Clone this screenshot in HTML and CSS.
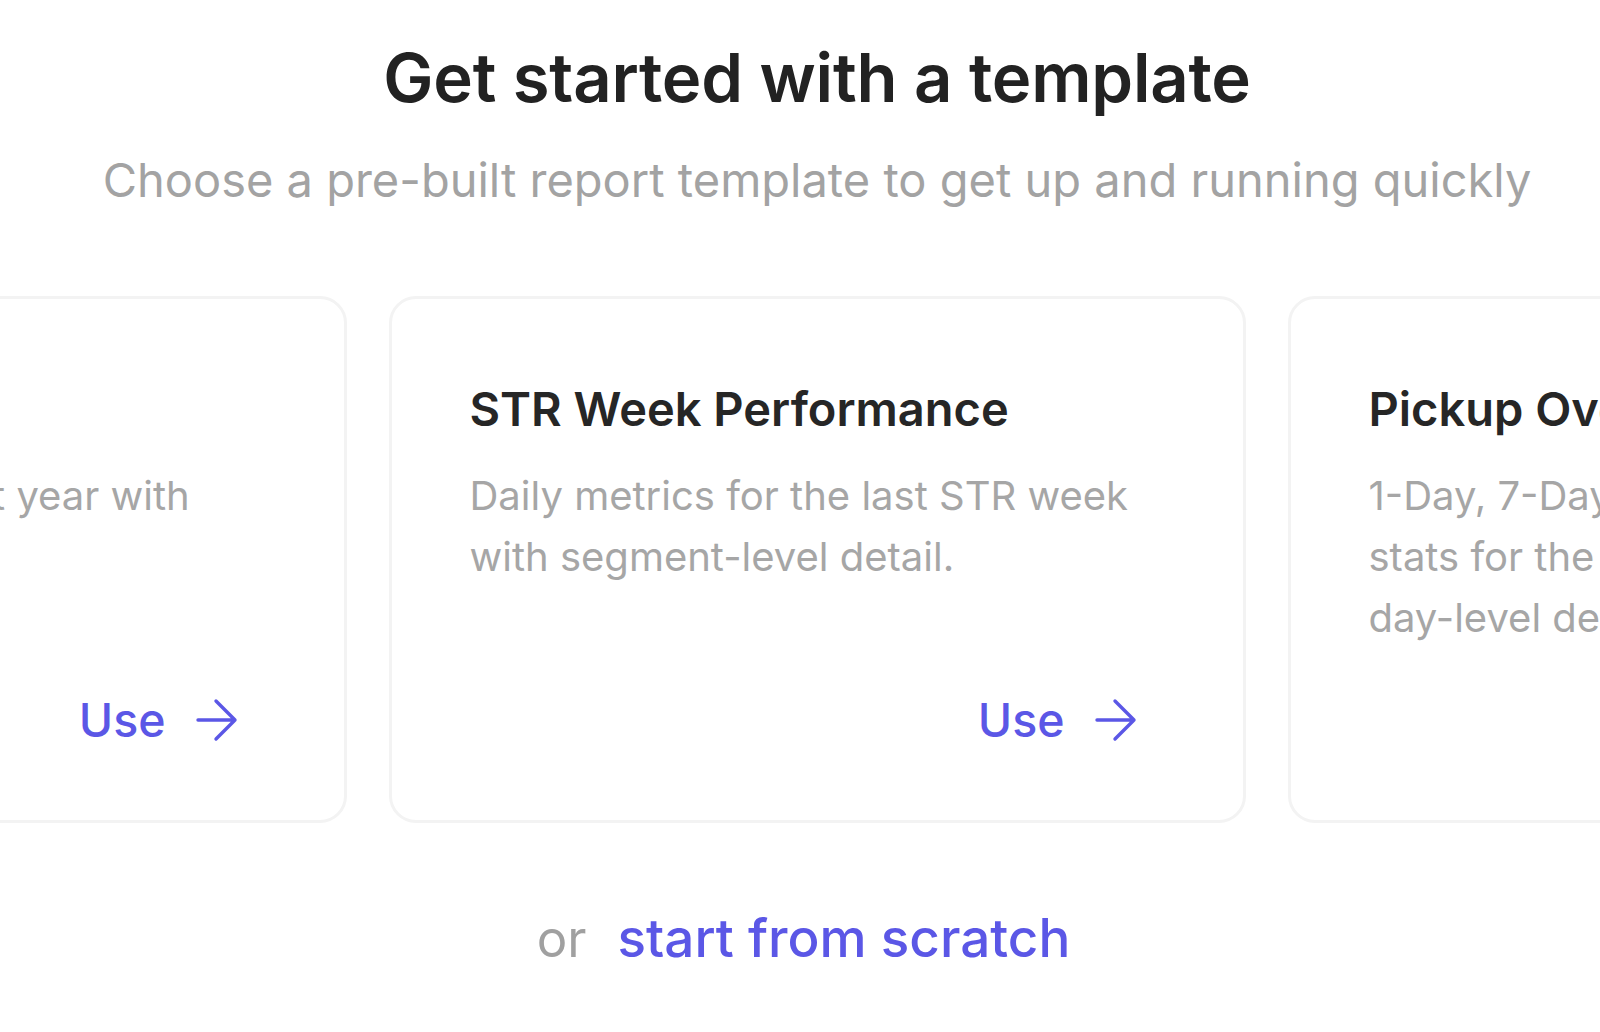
FILE: index.html
```html
<!DOCTYPE html>
<html lang="en">
<head>
<meta charset="utf-8">
<title>Get started with a template</title>
<link rel="stylesheet" href="styles.css">
</head>
<body>
<main class="page">
  <header class="intro">
    <h1 class="title">Get started with a template</h1>
    <p class="subtitle">Choose a pre-built report template to get up and running quickly</p>
  </header>
  <section class="carousel">
    <article class="card">
      <div class="card-body">
        <h2 class="card-title">Year over Year</h2>
        <p class="card-desc">Monthly results vs. last year with variance detail.</p>
      </div>
      <a class="use" href="#">Use <svg class="arrow" viewBox="0 0 44 44" width="44" height="44"><path d="M3 22h37M21 3l19 19-19 19" fill="none" stroke="currentColor" stroke-width="3.4" stroke-linecap="round" stroke-linejoin="round"/></svg></a>
    </article>
    <article class="card">
      <div class="card-body">
        <h2 class="card-title">STR Week Performance</h2>
        <p class="card-desc">Daily metrics for the last STR week with segment-level detail.</p>
      </div>
      <a class="use" href="#">Use <svg class="arrow" viewBox="0 0 44 44" width="44" height="44"><path d="M3 22h37M21 3l19 19-19 19" fill="none" stroke="currentColor" stroke-width="3.4" stroke-linecap="round" stroke-linejoin="round"/></svg></a>
    </article>
    <article class="card">
      <div class="card-body">
        <h2 class="card-title">Pickup Overview</h2>
        <p class="card-desc">1-Day, 7-Day and 30-Day pickup stats for the next 90 days with <span class="nowrap">day-level</span> detail.</p>
      </div>
      <a class="use" href="#">Use <svg class="arrow" viewBox="0 0 44 44" width="44" height="44"><path d="M3 22h37M21 3l19 19-19 19" fill="none" stroke="currentColor" stroke-width="3.4" stroke-linecap="round" stroke-linejoin="round"/></svg></a>
    </article>
  </section>
  <p class="scratch"><span class="or">or</span><a class="scratch-link" href="#">start from scratch</a></p>
</main>
</body>
</html>
```
FILE: styles.css
```css
html, body {
  margin: 0;
  padding: 0;
  background: #ffffff;
}
body {
  font-family: Inter, "Noto Sans", "Liberation Sans", sans-serif;
  overflow: hidden;
  width: 1600px;
  height: 1032px;
}
.page {
  width: 1600px;
  box-sizing: border-box;
  display: flex;
  flex-direction: column;
  align-items: center;
  padding-top: 38px;
  padding-left: 34px;
}
.intro {
  display: flex;
  flex-direction: column;
  align-items: center;
}
.title {
  margin: 0;
  font-size: 67px;
  line-height: 80px;
  font-weight: 600;
  color: #222222;
  letter-spacing: -0.2px;
  white-space: nowrap;
}
.subtitle {
  margin: 32px 0 0;
  font-size: 47px;
  line-height: 60px;
  font-weight: 400;
  color: #a3a3a3;
  white-space: nowrap;
}
.carousel {
  margin-top: 86px;
  margin-left: -34px;
  padding-left: 34px;
  align-self: stretch;
  display: flex;
  justify-content: center;
  gap: 42px;
  overflow: hidden;
}
.card {
  flex: 0 0 857px;
  height: 527px;
  box-sizing: border-box;
  border: 3px solid #f3f3f3;
  border-radius: 27px;
  background: #ffffff;
  padding: 80px 105px 70px 78px;
  display: flex;
  flex-direction: column;
  justify-content: space-between;
}
.card-title {
  margin: 0;
  font-size: 47px;
  line-height: 60px;
  font-weight: 600;
  color: #262626;
  white-space: nowrap;
}
.card-desc {
  margin: 26px 0 0;
  font-size: 40px;
  line-height: 61px;
  font-weight: 400;
  color: #a6a6a6;
  max-width: 695px;
}
.nowrap {
  white-space: nowrap;
}
.use {
  align-self: flex-end;
  display: flex;
  align-items: center;
  gap: 29px;
  font-size: 46.5px;
  line-height: 60px;
  font-weight: 500;
  color: #5b57e6;
  text-decoration: none;
}
.arrow {
  display: block;
}
.scratch {
  margin: 85px 0 0;
  padding-right: 27px;
  display: flex;
  align-items: baseline;
  gap: 31px;
  font-size: 53px;
  line-height: 60px;
}
.or {
  color: #a0a0a0;
  font-size: 51px;
}
.scratch-link {
  color: #5b57e6;
  font-weight: 500;
  text-decoration: none;
}
```
